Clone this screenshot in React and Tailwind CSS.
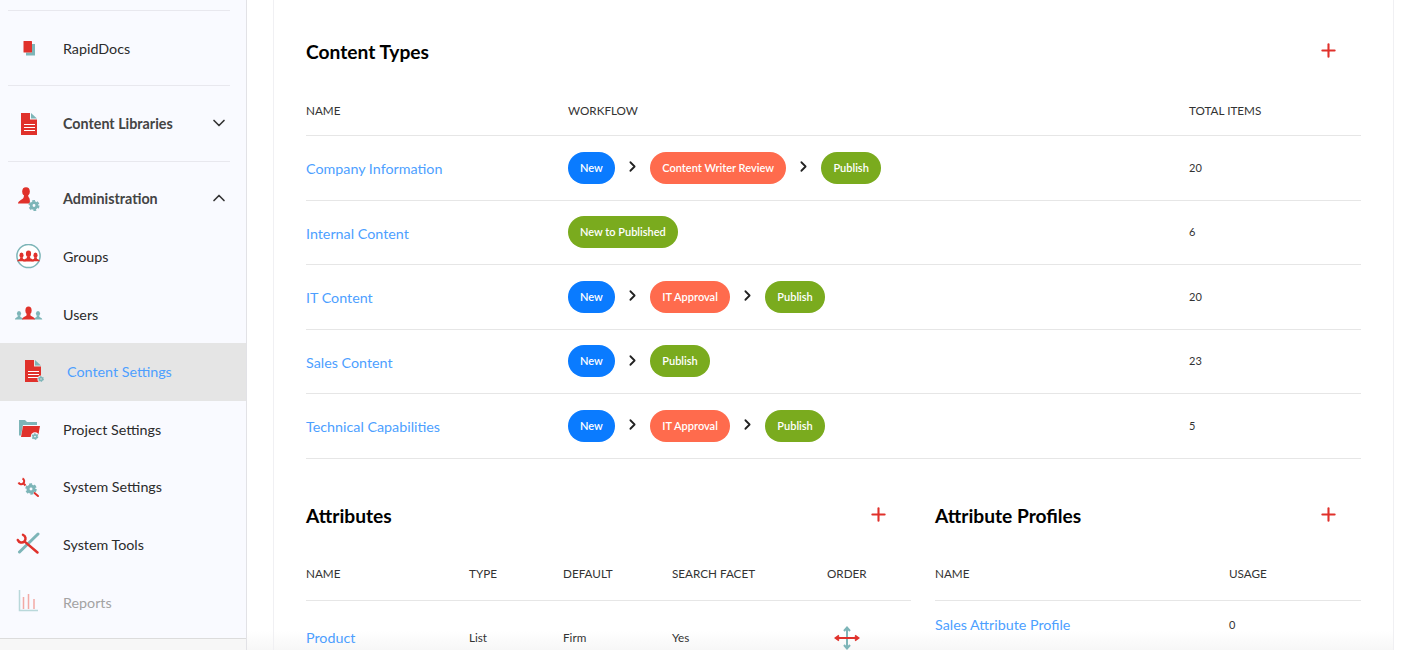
import React from "react";
import { ChevronDown, ChevronUp, ChevronRight, Plus } from "lucide-react";

const RED = "#e0312b";
const TEAL = "#7db5b8";

const Gear = ({ x, y, r = 3.4 }) => (
  <g>
    <circle cx={x} cy={y} r={r * 0.62} fill="none" stroke={TEAL} strokeWidth={r * 0.62} />
    <circle cx={x} cy={y} r={r} fill="none" stroke={TEAL} strokeWidth={r * 0.4} strokeDasharray={`${r * 0.6} ${r * 0.45}`} />
  </g>
);

const Person = ({ x, y, s = 1, fill = RED }) => (
  <g transform={`translate(${x} ${y}) scale(${s})`} fill={fill}>
    <ellipse cx="0" cy="-4.2" rx="2.6" ry="3.2" />
    <path d="M-1.5 -1.5 L1.5 -1.5 L1.8 0.2 C3.5 1 5 1.4 5.4 3.4 L-5.4 3.4 C-5 1.4 -3.5 1 -1.8 0.2Z" />
  </g>
);

const DocBody = () => (
  <>
    <path d="M1 0H10V6.5H17V22H1Z" fill={RED} />
    <path d="M11 0L17 5.5H11Z" fill={TEAL} />
    <path d="M4 11.5H15M4 14.5H15M4 17.5H15" stroke="#fff" strokeWidth="1" />
  </>
);

const icons = {
  rapid: (
    <svg width="28" height="24" viewBox="0 0 28 24">
      <path d="M17 7H20V18.500H11V15.500H17Z" fill={TEAL} />
      <rect x="8.500" y="4" width="8.500" height="11.500" rx="0.5" fill={RED} />
    </svg>
  ),
  libs: (
    <svg width="28" height="24" viewBox="0 0 28 24">
      <g transform="translate(5 1)"><DocBody /></g>
    </svg>
  ),
  admin: (
    <svg width="28" height="26" viewBox="0 0 28 26">
      <ellipse cx="11" cy="5.500" rx="3.800" ry="4.300" fill={RED} />
      <path d="M9 8.500H13L13.500 11C14.500 12 15 13 15 17.500H3C3 15 6.500 14 8 12.500C8.800 11.500 9 10 9 8.500Z" fill={RED} />
      <Gear x={19} y={19.500} r={4.600} />
    </svg>
  ),
  groups: (
    <svg width="28" height="26" viewBox="0 0 28 26">
      <circle cx="13.500" cy="12" r="11.600" fill="#fff" stroke={TEAL} strokeWidth="1.500" />
      <Person x={6.500} y={14.500} s={0.8} />
      <Person x={20.500} y={14.500} s={0.8} />
      <Person x={13.500} y={14} s={1} />
    </svg>
  ),
  users: (
    <svg width="28" height="24" viewBox="0 0 28 24">
      <Person x={4} y={14.900} s={0.8} fill={TEAL} />
      <Person x={23} y={14.900} s={0.8} fill={TEAL} />
      <Person x={13.500} y={13.500} s={1.200} />
    </svg>
  ),
  content: (
    <svg width="30" height="26" viewBox="0 0 30 26">
      <g transform="translate(9 1)"><DocBody /></g>
      <circle cx="26" cy="20" r="3.600" fill="#e5e5e5" />
      <Gear x={26} y={20} r={2.500} />
    </svg>
  ),
  project: (
    <svg width="28" height="24" viewBox="0 0 28 24">
      <path d="M4 2H10L12 4H22V7H8L6 17.500H4Z" fill={TEAL} />
      <path d="M8 8H25L23 19H6Z" fill={RED} />
      <circle cx="20" cy="18.500" r="4.200" fill="#f9faff" />
      <Gear x={20} y={18.500} r={2.800} />
    </svg>
  ),
  system: (
    <svg width="28" height="24" viewBox="0 0 28 24">
      <path d="M7.500 3.500A3 3 0 1 1 3.500 7.500M8.300 8.300L10.500 10.500" fill="none" stroke={RED} strokeWidth="2" />
      <path d="M19.500 18L23 21" stroke={RED} strokeWidth="2" strokeLinecap="round" />
      <Gear x={16} y={14} r={4.800} />
    </svg>
  ),
  tools: (
    <svg width="28" height="26" viewBox="0 0 28 26">
      <path d="M4.500 20L23 2" stroke={TEAL} strokeWidth="3" strokeLinecap="round" />
      <path d="M8 2.800A4 4 0 1 1 2.800 8M9.400 9.400L22.500 20.500" fill="none" stroke={RED} strokeWidth="2.500" strokeLinecap="round" />
    </svg>
  ),
  reports: (
    <svg width="28" height="24" viewBox="0 0 28 24">
      <path d="M4.500 0V20.500H23" fill="none" stroke="#b9d8da" strokeWidth="1.500" />
      <path d="M8.500 7V19M13.500 4V19M19 9V19" stroke="#f2a9a5" strokeWidth="1.500" />
    </svg>
  ),
};

const Badge = ({ tone, children }) => {
  const bg = tone === "blue" ? "bg-[#0a7bff]" : tone === "orange" ? "bg-[#ff6b4d]" : "bg-[#7aab1e]";
  return (
    <span className={`${bg} h-[32px] px-3 rounded-full text-white text-[11px] font-semibold flex items-center`}>
      {children}
    </span>
  );
};

const Flow = ({ steps }) => (
  <div className="flex items-center">
    {steps.map((s, i) => (
      <React.Fragment key={i}>
        {i > 0 && (
          <span className="w-[35.500px] flex justify-center">
            <ChevronRight size={17} strokeWidth={2.500} className="text-[#222] -mt-[2px]" />
          </span>
        )}
        <Badge tone={s[1]}>{s[0]}</Badge>
      </React.Fragment>
    ))}
  </div>
);

const contentRows = [
  ["Company Information", [["New", "blue"], ["Content Writer Review", "orange"], ["Publish", "green"]], "20"],
  ["Internal Content", [["New to Published", "green"]], "6"],
  ["IT Content", [["New", "blue"], ["IT Approval", "orange"], ["Publish", "green"]], "20"],
  ["Sales Content", [["New", "blue"], ["Publish", "green"]], "23"],
  ["Technical Capabilities", [["New", "blue"], ["IT Approval", "orange"], ["Publish", "green"]], "5"],
];

const SectionHead = ({ title, plusClass }) => (
  <div className="flex items-center justify-between">
    <h2 className="text-[19.200px] font-bold text-black leading-[24px]">{title}</h2>
    <Plus size={21} strokeWidth={2.400} className={`text-[#e0312b] ${plusClass}`} />
  </div>
);

const NavItem = ({ icon, label, dim }) => (
  <div className="h-[57.600px] flex items-center pl-[15px]">
    <span className="w-[48px] shrink-0 flex">{icons[icon]}</span>
    <span className={`text-[14.300px] ${dim ? "text-[#a3a3a3]" : "text-[#2b2b2b]"}`}>{label}</span>
  </div>
);

const Sep = () => <div className="mx-[8px] w-[222px] border-t border-[#e8e8ee]" />;

export default function App() {
  return (
    <div
      className="flex w-[1406px] h-[650px] overflow-hidden bg-white text-[#333]"
      style={{ fontFamily: '"Lato", "Liberation Sans", sans-serif' }}
    >
      {/* Sidebar */}
      <aside className="w-[247px] shrink-0 h-full bg-[#f9faff] border-r border-[#e2e2e6] flex flex-col pt-[10px]">
        <Sep />
        <div className="h-[74px] flex items-center pl-[15px] pt-[1px]">
          <span className="w-[48px] shrink-0 flex">{icons.rapid}</span>
          <span className="text-[14.300px] text-[#2b2b2b]">RapidDocs</span>
        </div>
        <Sep />
        <div className="h-[75px] flex items-center pl-[15px] pr-[17px]">
          <span className="w-[48px] shrink-0 flex">{icons.libs}</span>
          <span className="text-[14.300px] font-bold text-[#444] flex-1">Content Libraries</span>
          <ChevronDown size={20} strokeWidth={2} className="text-[#333] -mt-[2px]" />
        </div>
        <Sep />
        <div className="h-[66px] flex items-center pl-[15px] pr-[17px] pt-[8px]">
          <span className="w-[48px] shrink-0 flex">{icons.admin}</span>
          <span className="text-[14.300px] font-bold text-[#444] flex-1">Administration</span>
          <ChevronUp size={20} strokeWidth={2} className="text-[#333] -mt-[2px]" />
        </div>
        <NavItem icon="groups" label="Groups" />
        <NavItem icon="users" label="Users" />
        <div className="h-[57.600px] flex items-center pl-[15px] bg-[#e5e5e5]">
          <span className="w-[52px] shrink-0 flex">{icons.content}</span>
          <span className="text-[14.300px] text-[#4d9fff]">Content Settings</span>
        </div>
        <NavItem icon="project" label="Project Settings" />
        <NavItem icon="system" label="System Settings" />
        <NavItem icon="tools" label="System Tools" />
        <NavItem icon="reports" label="Reports" dim />
        <div className="mt-[7px] border-t border-[#dcdcdc] flex-1 bg-[#f7f7f7]" />
      </aside>

      {/* Main, with the faint fade at its bottom edge */}
      <main className="w-[1147px] h-full pl-[26px] shrink-0 bg-gradient-to-b from-white from-[97%] to-[#f7f7f7]">
        <div className="w-[1121px] h-full border-x border-[#f0f0f3] px-[32px] pt-[40px]">
          <SectionHead title="Content Types" plusClass="mr-[22px] -mt-[4px]" />

          <div className="mt-[35px] h-[37px] border-b border-[#e6e6e6] flex text-[11.700px] text-[#333] pt-[3px]">
            <span className="w-[262px]">NAME</span>
            <span className="w-[621px]">WORKFLOW</span>
            <span>TOTAL ITEMS</span>
          </div>
          {contentRows.map((r) => (
            <div key={r[0]} className="h-[64.500px] border-b border-[#e6e6e6] flex items-center">
              <span className="w-[262px] text-[14.300px] text-[#4d9fff] pt-[2px]">{r[0]}</span>
              <div className="w-[621px]"><Flow steps={r[1]} /></div>
              <span className="text-[11px] text-[#333]">{r[2]}</span>
            </div>
          ))}

          <div className="mt-[45px] flex">
            <section className="w-[605px] shrink-0">
              <SectionHead title="Attributes" plusClass="mr-[22px] -mt-[2px]" />
              <div className="mt-[37px] h-[36px] border-b border-[#e6e6e6] flex text-[11.700px] text-[#333]">
                <span className="w-[163px]">NAME</span>
                <span className="w-[94px]">TYPE</span>
                <span className="w-[109px]">DEFAULT</span>
                <span className="w-[155px]">SEARCH FACET</span>
                <span>ORDER</span>
              </div>
              <div className="flex items-center h-[74px]">
                <span className="w-[163px] text-[14.300px] text-[#4d9fff]">Product</span>
                <span className="w-[94px] text-[11.700px]">List</span>
                <span className="w-[109px] text-[11.700px]">Firm</span>
                <span className="w-[155px] text-[11.700px]">Yes</span>
                <svg width="26" height="26" viewBox="0 0 26 26" className="ml-[7px]">
                  <path d="M13 3V23M10 6L13 2.500L16 6M10 20L13 23.500L16 20" fill="none" stroke={TEAL} strokeWidth="2" />
                  <path d="M2 13H24M5 10.500L1.500 13L5 15.500M21 10.500L24.500 13L21 15.500" fill="none" stroke={RED} strokeWidth="1.800" />
                </svg>
              </div>
            </section>
            <section className="ml-[24px] flex-1">
              <SectionHead title="Attribute Profiles" plusClass="mr-[22px] -mt-[2px]" />
              <div className="mt-[37px] h-[36px] border-b border-[#e6e6e6] flex text-[11.700px] text-[#333]">
                <span className="w-[294px]">NAME</span>
                <span>USAGE</span>
              </div>
              <div className="flex items-center h-[50px] border-b border-[#d8d8d8]">
                <span className="w-[294px] text-[14.300px] text-[#4d9fff]">Sales Attribute Profile</span>
                <span className="text-[11px]">0</span>
              </div>
            </section>
          </div>
        </div>
      </main>
    </div>
  );
}
